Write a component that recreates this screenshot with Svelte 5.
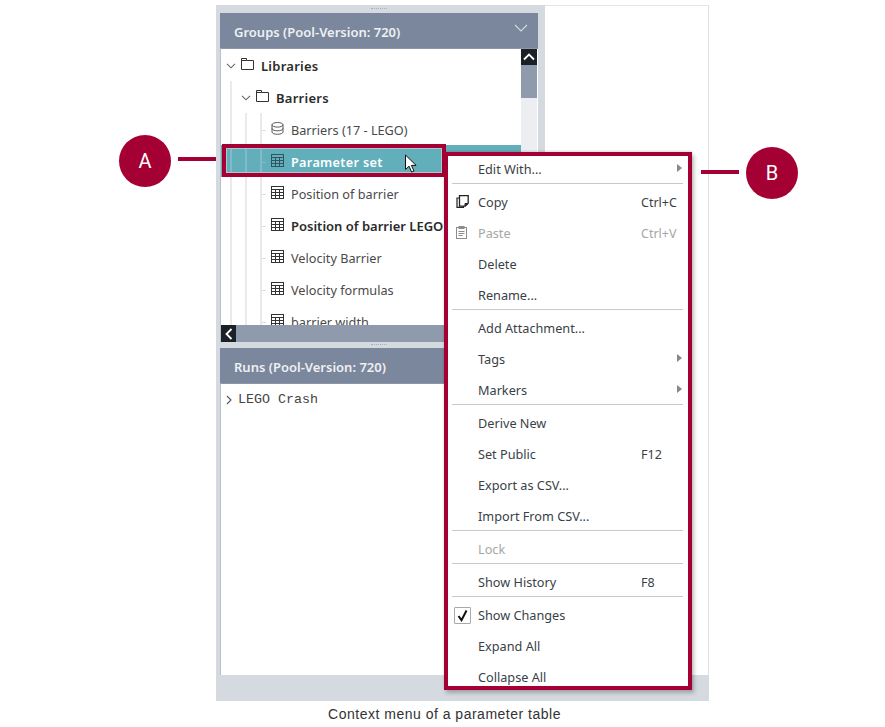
<script>
  const rows = [
    { label: 'Libraries', depth: 0, icon: 'folder', open: true, bold: true },
    { label: 'Barriers', depth: 1, icon: 'folder', open: true, bold: true },
    { label: 'Barriers (17 - LEGO)', depth: 2, icon: 'db' },
    { label: 'Parameter set', depth: 2, icon: 'table', selected: true },
    { label: 'Position of barrier', depth: 2, icon: 'table' },
    { label: 'Position of barrier LEGO', depth: 2, icon: 'table', bold: true },
    { label: 'Velocity Barrier', depth: 2, icon: 'table' },
    { label: 'Velocity formulas', depth: 2, icon: 'table' },
    { label: 'barrier width', depth: 2, icon: 'table' }
  ];

  const menu = [
    { label: 'Edit With...', more: true },
    { sep: true },
    { label: 'Copy', key: 'Ctrl+C', icon: 'copy' },
    { label: 'Paste', key: 'Ctrl+V', icon: 'paste', off: true },
    { label: 'Delete' },
    { label: 'Rename...' },
    { sep: true },
    { label: 'Add Attachment...' },
    { label: 'Tags', more: true },
    { label: 'Markers', more: true },
    { sep: true },
    { label: 'Derive New' },
    { label: 'Set Public', key: 'F12' },
    { label: 'Export as CSV...' },
    { label: 'Import From CSV...' },
    { sep: true },
    { label: 'Lock', off: true },
    { sep: true },
    { label: 'Show History', key: 'F8' },
    { sep: true },
    { label: 'Show Changes', icon: 'check' },
    { label: 'Expand All' },
    { label: 'Collapse All' }
  ];
</script>

<div class="page">
  <div class="window">
    <div class="left">
      <div class="sash"><span class="dots"></span></div>
      <div class="head">
        <span>Groups (Pool-Version: 720)</span>
        <svg width="14" height="8" viewBox="0 0 14 8" class="head-arrow"><path d="M1 1l6 6 6-6" fill="none" stroke="#d5dae1" stroke-width="1.1"/></svg>
      </div>
      <div class="pane groups">
        <div class="tree-wrap">
          <div class="tree">
            {#each rows as r}
              <div class="row" class:selected={r.selected} class:bold={r.bold} class:open={r.open}>
                {#each Array(r.depth) as _}
                  <span class="guide"></span>
                {/each}
                {#if r.depth === 2}
                  <span class="stub"></span>
                {/if}
                {#if r.open}
                  <svg class="chev" width="10" height="6" viewBox="0 0 10 6"><path d="M1 .8l4 4 4-4" fill="none" stroke="#666" stroke-width="1.1"/></svg>
                {/if}
                <span class="ico">
                  {#if r.icon === 'folder'}
                    <svg width="13" height="12" viewBox="0 0 13 12"><path d="M.5 11.5V.5h5v2h7v9z" fill="none" stroke="#333"/><path d="M.5 2.500h5" stroke="#333"/></svg>
                  {:else if r.icon === 'db'}
                    <svg width="13" height="13" viewBox="0 0 13 13" fill="none" stroke="#555"><ellipse cx="6.5" cy="2.8" rx="5.5" ry="2.3"/><path d="M1 2.8v7.2c0 1.3 2.5 2.3 5.5 2.3s5.500-1 5.500-2.300V2.800M1 6.500c0 1.300 2.500 2.300 5.500 2.300s5.500-1 5.500-2.300"/></svg>
                  {:else}
                    <svg width="13" height="13" viewBox="0 0 13 13" fill="none" stroke={r.selected ? '#2f5560' : '#333'}><rect x=".5" y=".5" width="12" height="12"/><path d="M.5 3.500h12M.5 6.500h12M.5 9.500h12M4.500 3.500v9M8.500 3.500v9"/></svg>
                  {/if}
                </span>
                <span class="label">{r.label}</span>
              </div>
            {/each}
          </div>
          <div class="vbar">
            <span class="btn">
              <svg width="12" height="8" viewBox="0 0 12 8"><path d="M1 6.500l5-5 5 5" fill="none" stroke="#fff" stroke-width="1.800"/></svg>
            </span>
            <span class="thumb"></span>
          </div>
        </div>
        <div class="hbar">
          <span class="btn">
            <svg width="8" height="12" viewBox="0 0 8 12"><path d="M6.500 1l-5 5 5 5" fill="none" stroke="#fff" stroke-width="1.800"/></svg>
          </span>
        </div>
      </div>
      <div class="sash small"><span class="dots"></span></div>
      <div class="head">
        <span>Runs (Pool-Version: 720)</span>
      </div>
      <div class="pane runs">
        <div class="run">
          <svg width="6" height="10" viewBox="0 0 6 10"><path d="M1 1l4 4-4 4" fill="none" stroke="#555" stroke-width="1.100"/></svg>
          <span>LEGO Crash</span>
        </div>
      </div>
    </div>
    <div class="right"></div>
    <div class="strip"></div>
  </div>

  <p class="caption">Context menu of a parameter table</p>

  <!-- annotations on top of the screenshot -->
  <div class="mark mark-a">A</div>
  <div class="line line-a"></div>
  <div class="box-a"></div>

  <svg class="cursor" width="14" height="20" viewBox="0 0 14 20"><path d="M1.500 1v14.500l3.500-3.300 2.600 5.800 2.400-1-2.600-5.600h4.700z" fill="#fff" stroke="#111" stroke-width="1"/></svg>

  <div class="menu">
    <div class="items">
      {#each menu as m}
        {#if m.sep}
          <div class="sep"></div>
        {:else}
          <div class="item" class:off={m.off}>
            <span class="m-ico">
              {#if m.icon === 'copy'}
                <svg width="13" height="13" viewBox="0 0 13 13" fill="none" stroke="#222"><path d="M3.500.7h8.700v7.500l-3 3H3.500z" stroke-width="1.300"/><path d="M3.500 3H1v9.300h6.500v-1.300" stroke-width="1.200"/><path d="M9 11V8.500h3z" fill="#222"/></svg>
              {:else if m.icon === 'paste'}
                <svg width="11" height="13" viewBox="0 0 11 13" fill="none" stroke="#8c8c8c"><rect x=".5" y="1.500" width="10" height="11"/><rect x="3" y=".5" width="5" height="2" fill="#8c8c8c"/><path d="M2.500 5.500h6M2.500 7.500h6M2.500 9.500h4"/></svg>
              {:else if m.icon === 'check'}
                <span class="checkbox">
                  <svg width="13" height="13" viewBox="0 0 13 13"><path d="M2.500 7l3 4.200L10.500 1.500" fill="none" stroke="#111" stroke-width="2"/></svg>
                </span>
              {/if}
            </span>
            <span class="m-label">{m.label}</span>
            {#if m.key}<span class="m-key">{m.key}</span>{/if}
            {#if m.more}<span class="m-more"></span>{/if}
          </div>
        {/if}
      {/each}
    </div>
  </div>

  <div class="line line-b"></div>
  <div class="mark mark-b">B</div>
</div>

<style>
  :global(body) { margin: 0; background: #fff; }

  .page {
    position: relative; width: 885px; height: 727px; overflow: hidden;
    padding-top: 5px; box-sizing: border-box;
    font-family: "Noto Sans", sans-serif; font-size: 13px; color: #333;
  }

  .window {
    margin-left: 216px; width: 493px; height: 696px;
    display: grid; grid-template-columns: 329px 164px; grid-template-rows: 670px 26px;
    background: #d5dae1;
  }

  .left {
    display: flex; flex-direction: column; padding: 0 7px 0 4px; min-height: 0;
  }
  .right { background: #fff; border-top: 1px solid #e2e4e8; border-right: 1px solid #dfe1e5; }
  .strip { grid-column: 1 / 3; background: #d5dae1; }

  .sash { height: 8px; display: flex; justify-content: center; align-items: center; flex: none; }
  .sash.small { height: 6px; }
  .dots { width: 16px; height: 1px; border-top: 1px dotted #a9afba; }

  .head {
    height: 35px; flex: none; background: #7a879c; color: #eef0f3;
    display: flex; align-items: center; justify-content: space-between;
    padding: 3px 10px 0 14px; box-sizing: border-box; font-weight: 600; font-size: 13px;
  }
  .head-arrow { margin-top: -9px; }

  .pane { background: #fff; border-left: 1px solid #b9c0ca; border-top: 1px solid #8d97a8; }
  .groups { height: 293px; flex: none; display: flex; flex-direction: column; }
  .runs { flex: 1; }

  .tree-wrap { flex: 1; display: flex; min-height: 0; }
  .tree { flex: 1; overflow: hidden; }

  .row {
    height: 32px; display: flex; align-items: center; padding: 2px 0 0 9px;
    box-sizing: border-box; white-space: nowrap;
  }
  .row:first-child { padding-left: 4px; }
  .row.bold .label { font-weight: 600; color: #2b2b2b; font-size: 13px; }
  .row.open .label { letter-spacing: 0.25px; }
  .row.selected { background: #63aebb; }
  .row.selected .label { color: #fff; font-weight: 600; letter-spacing: 0.3px; }
  .row.selected .guide, .row.selected .stub { border-color: #7fbcc7; }
  .row.selected .stub::before { background: #7fbcc7; }

  .guide { width: 15px; align-self: stretch; margin-top: -2px; border-left: 2px solid #eaeaea; box-sizing: border-box; flex: none; }
  .stub {
    width: 11px; align-self: stretch; margin-top: -2px; border-left: 2px solid #eaeaea; box-sizing: border-box;
    display: flex; align-items: center; flex: none;
  }
  .stub::before { content: ''; width: 4px; height: 1px; background: #dcdcdc; margin-top: 2px; }

  .chev { margin: 0 5px 0 -4px; flex: none; }
  .row:first-child .chev { margin: 0 5px 0 1px; }
  .ico { width: 13px; height: 13px; flex: none; display: flex; margin: -4px 7px 0 0; }
  .label { color: #4a4a4a; font-size: 12.7px; }

  .vbar { width: 16px; background: #eceef2; display: flex; flex-direction: column; flex: none; margin-right: 1px; }
  .vbar .thumb { height: 33px; background: #8f9aac; }
  .btn { background: #1b2027; display: flex; align-items: center; justify-content: center; width: 16px; height: 16px; flex: none; }
  .hbar { height: 17px; flex: none; background: #8f9aac; display: flex; align-items: stretch; }
  .hbar .btn { height: auto; width: 15px; }

  .run {
    display: flex; align-items: center; gap: 6px; padding: 8px 0 0 5px;
    font-family: "Liberation Mono", monospace; font-size: 13.33px; color: #444;
  }

  .caption {
    margin: 5px 0 0; padding-left: 4px; text-align: center;
    font-family: "Liberation Sans", sans-serif; font-size: 14px; letter-spacing: 0.5px; color: #333;
  }

  .mark {
    position: absolute; width: 52px; height: 52px; border-radius: 50%;
    background: #a50034; color: #fff; display: flex; align-items: center; justify-content: center;
    font-family: Roboto, sans-serif; font-size: 20px;
  }
  .mark-a { left: 119px; top: 135px; }
  .mark-b { left: 746px; top: 147px; }

  .line { position: absolute; height: 4px; background: #a50034; }
  .line-a { left: 178px; top: 157px; width: 38px; }
  .line-b { left: 701px; top: 170px; width: 38px; }

  .box-a {
    position: absolute; left: 222px; top: 144px; width: 224px; height: 33px;
    box-sizing: border-box; border: 4px solid #a50034; box-shadow: inset 0 0 0 1px #a9c9cf;
  }

  .cursor { position: absolute; left: 404px; top: 154px; }

  .menu {
    position: absolute; left: 444px; top: 152px; width: 248px; height: 538px;
    box-sizing: border-box; border: 4px solid #a50034; background: #fff; overflow: hidden;
    box-shadow: 2px 3px 4px rgba(0, 0, 0, 0.25), 0 -1px 2px rgba(0, 0, 0, 0.12);
  }
  .items { margin-top: -2px; }

  .item { height: 31px; display: flex; align-items: center; position: relative; padding-left: 30px; white-space: nowrap; }
  .m-label { color: #3a3f47; font-size: 12.7px; margin-top: -2px; }
  .item.off .m-label, .item.off .m-key { color: #a6a6a6; }
  .m-ico { width: 20px; margin: -2px 2px 0 -22px; display: flex; justify-content: flex-start; }
  .m-key { position: absolute; left: 193px; color: #3a3f47; font-size: 12.5px; }
  .m-more {
    position: absolute; right: 6px; top: 10px; width: 0; height: 0;
    border-left: 5px solid #888; border-top: 4px solid transparent; border-bottom: 4px solid transparent;
  }

  .sep { height: 1px; margin: -2px 5px 3px 4px; background: #c9c9cc; }

  .checkbox {
    width: 17px; height: 17px; border: 1px solid #a9a9a9; border-radius: 1px; box-sizing: border-box;
    display: flex; align-items: center; justify-content: center; margin: 2px 0 0 -2px;
  }
</style>
